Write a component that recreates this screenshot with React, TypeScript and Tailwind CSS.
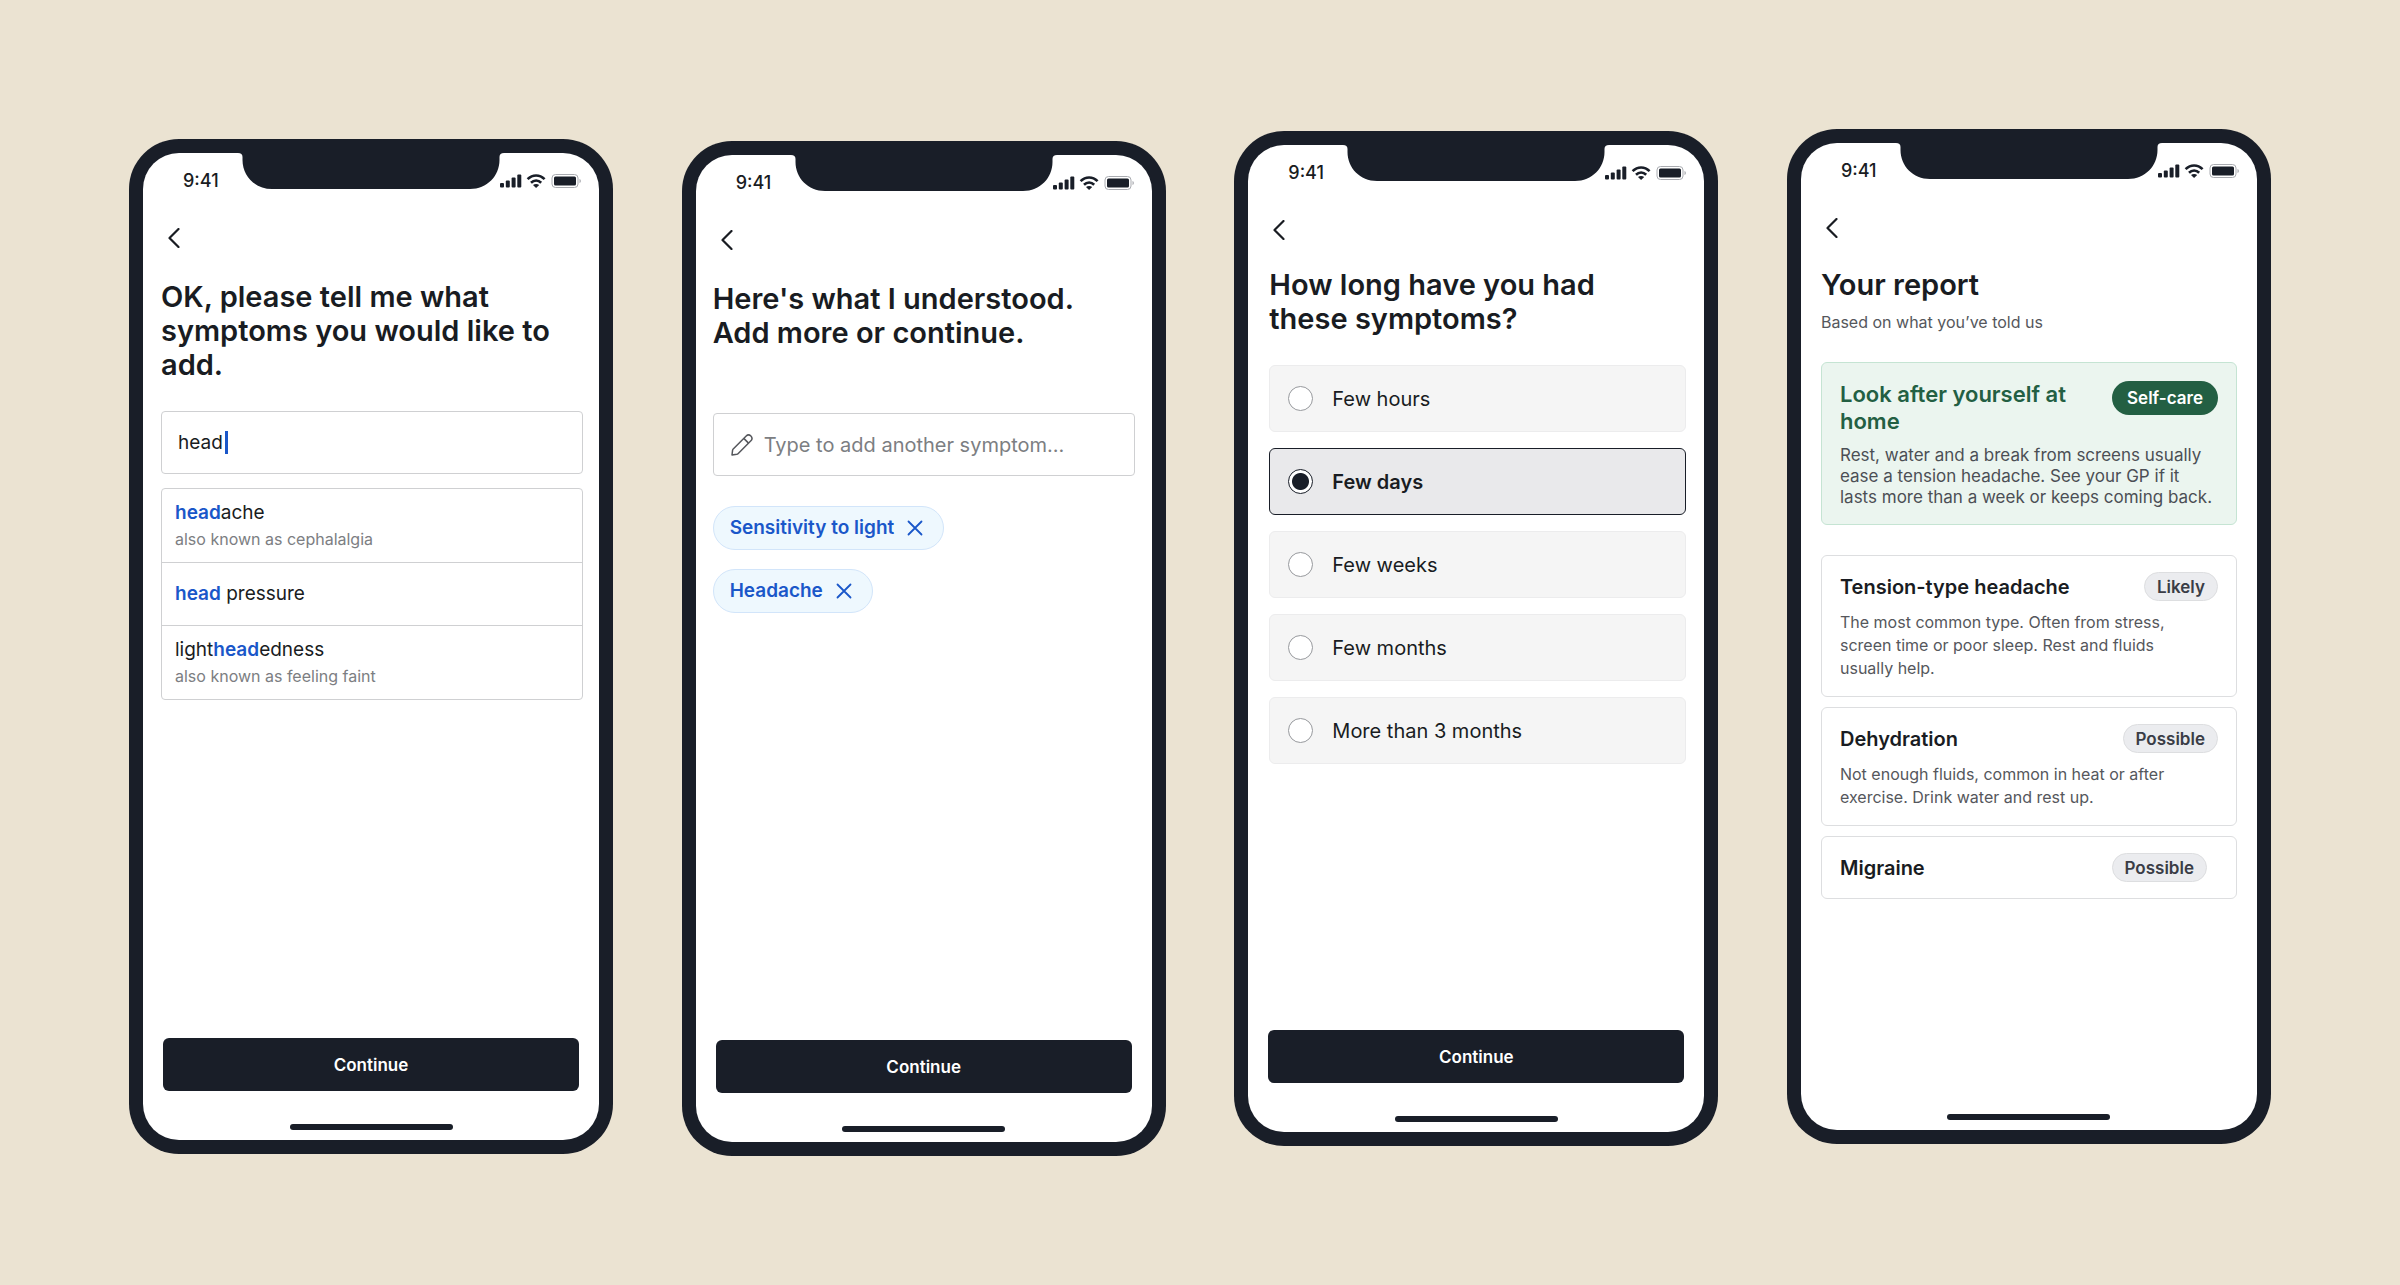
import { useState } from 'react'
import type { ReactNode } from 'react'
import clsx from 'clsx'

const DURATIONS = ['Few hours', 'Few days', 'Few weeks', 'Few months', 'More than 3 months']

const SUGGESTIONS = [
  { name: 'headache', aka: 'also known as cephalalgia' },
  { name: 'head pressure' },
  { name: 'lightheadedness', aka: 'also known as feeling faint' },
]

const CONDITIONS = [
  {
    name: 'Tension-type headache',
    chance: 'Likely',
    body: 'The most common type. Often from stress, screen time or poor sleep. Rest and fluids usually help.',
  },
  {
    name: 'Dehydration',
    chance: 'Possible',
    body: 'Not enough fluids, common in heat or after exercise. Drink water and rest up.',
  },
  { name: 'Migraine', chance: 'Possible' },
]

function Notch() {
  return (
    <svg
      aria-hidden="true"
      viewBox="0 0 266 37"
      className="absolute left-1/2 top-0 h-[37px] w-[266px] -translate-x-1/2 -translate-y-px"
      fill="#191e28"
    >
      <path d="M0 0H266V1C263 1 261.500 2.500 261.500 5V8C261.500 24 249 37 232 37H34C17 37 4.500 24 4.500 8V5C4.500 2.500 3 1 0 1Z" />
    </svg>
  )
}

function StatusIcons() {
  return (
    <svg aria-hidden="true" viewBox="0 0 82 16" className="h-4 w-[82px]" fill="#191e28">
      {/* signal */}
      <rect x="0" y="10" width="4" height="4.500" rx="1" />
      <rect x="5.800" y="7.500" width="4" height="7" rx="1" />
      <rect x="11.600" y="4.500" width="4" height="10" rx="1" />
      <rect x="17.300" y="1.500" width="4" height="13" rx="1" />
      {/* wifi */}
      <g fill="none" stroke="#191e28" strokeWidth="2.600">
        <path d="M27.600 6.200C32.600 1.200 39.600 1.200 44.600 6.200" />
        <path d="M31 9.800C34 6.900 38.200 6.900 41.200 9.800" />
      </g>
      <path d="M36.100 15L33 12C34.700 10.500 37.500 10.500 39.200 12Z" />
      {/* battery */}
      <rect x="52" y="1.500" width="26" height="13" rx="3.500" fill="none" stroke="#a9abb0" />
      <rect x="54" y="3.500" width="22" height="9" rx="1.500" />
      <path d="M79.500 6C81.300 6.500 81.300 9.500 79.500 10Z" fill="#a9abb0" />
    </svg>
  )
}

function PencilIcon() {
  return (
    <svg
      aria-hidden="true"
      viewBox="0 0 22 22"
      className="size-[22px] shrink-0"
      fill="none"
      stroke="#55575c"
      strokeWidth="1.500"
      strokeLinejoin="round"
    >
      <path d="M1 21L1.600 16.200C1.700 15.700 1.900 15.300 2.200 15L15.200 2C16.500 0.700 18.500 0.700 19.900 2C21.200 3.400 21.200 5.400 19.900 6.700L7 19.700C6.700 20 6.300 20.200 5.800 20.300Z" />
      <path d="M12.800 4.400L17.500 9.100" />
    </svg>
  )
}

type PhoneProps = {
  title: string
  subtitle?: string
  className?: string
  bodyClassName: string
  titleClassName?: string
  action?: boolean
  children: ReactNode
}

function Phone({ title, subtitle, className, bodyClassName, titleClassName, action = true, children }: PhoneProps) {
  return (
    <section className={clsx('w-[484px] shrink-0 rounded-[50px] bg-[#191e28] p-3.5', className)}>
      <div className="relative flex min-h-[987px] flex-col overflow-hidden rounded-[36px] bg-white">
        <Notch />
        <div className="flex h-14 items-center justify-between pl-10 pr-[17px]">
          <span className="text-[18px] font-medium leading-6">9:41</span>
          <StatusIcons />
        </div>

        <div className="flex h-[58px] items-center pl-[18px]">
          <button type="button" aria-label="Back" className="flex size-[26px] items-center justify-center">
            <svg
              viewBox="0 0 12 20"
              className="h-5 w-3"
              fill="none"
              stroke="#191c22"
              strokeWidth="2.200"
              strokeLinecap="round"
              strokeLinejoin="round"
            >
              <path d="M10.500 1L1.500 10L10.500 19" />
            </svg>
          </button>
        </div>

        <div className={clsx('flex grow flex-col', bodyClassName)}>
          <h2 className={clsx('text-[29px] font-semibold leading-[34px]', titleClassName)}>{title}</h2>
          {subtitle && <p className="mt-2 text-[16px] leading-6 text-[#55575c]">{subtitle}</p>}
          {children}
        </div>

        {action && (
          <div className="px-5">
            <button
              type="button"
              className="h-[53px] w-full rounded-md bg-[#191e28] text-[17px] font-semibold leading-6 text-white"
            >
              Continue
            </button>
          </div>
        )}
        <div className="mx-auto mb-2.5 mt-[33px] h-1.5 w-[163px] rounded-full bg-[#191e28]" />
      </div>
    </section>
  )
}

function Highlight({ text, match }: { text: string; match: string }) {
  const at = text.indexOf(match)
  return (
    <span className="text-[19px] leading-7">
      {text.slice(0, at)}
      <b className="font-semibold text-[#1a57c9]">{match}</b>
      {text.slice(at + match.length)}
    </span>
  )
}

function SymptomSearch() {
  const [query, setQuery] = useState('head')

  return (
    <>
      <label className="mt-[29px] flex h-[63px] items-center rounded border border-[#cfd0d2] pl-4">
        <input
          aria-label="Symptom"
          value={query}
          onChange={(e) => setQuery(e.target.value)}
          className="field-sizing-content text-[19px] leading-7 outline-none"
        />
        <span className="ml-0.5 h-[23px] w-[3px] bg-[#1a57c9]" />
      </label>
      <ul className="mt-3.5 divide-y divide-[#cfd0d2] rounded border border-[#cfd0d2]">
        {SUGGESTIONS.map((s) => (
          <li key={s.name}>
            <button
              type="button"
              className={clsx('flex w-full flex-col px-[13px] text-left', s.aka ? 'py-2.5' : 'py-[17px]')}
            >
              <Highlight text={s.name} match="head" />
              {s.aka && <span className="text-[16px] leading-[25px] text-[#7c7e82]">{s.aka}</span>}
            </button>
          </li>
        ))}
      </ul>
    </>
  )
}

function SymptomChips() {
  const [chips, setChips] = useState(['Sensitivity to light', 'Headache'])

  return (
    <>
      <label className="mt-[29px] flex h-[63px] items-center gap-[11px] rounded border border-[#cfd0d2] px-[17px]">
        <PencilIcon />
        <input
          aria-label="Add another symptom"
          placeholder="Type to add another symptom..."
          className="min-w-0 grow text-[20px] leading-7 outline-none placeholder:text-[#7c7e82]"
        />
      </label>
      <div className="mt-[30px] flex flex-col items-start gap-[19px]">
        {chips.map((chip) => (
          <span
            key={chip}
            className="flex h-11 items-center gap-[13px] rounded-full border border-[#d2e5fa] bg-[#eef8fe] pl-4 pr-5 text-[19px] font-semibold leading-7 text-[#1a57c9]"
          >
            {chip}
            <button type="button" aria-label={`Remove ${chip}`} onClick={() => setChips(chips.filter((c) => c !== chip))}>
              <svg viewBox="0 0 16 16" className="size-4" stroke="#1a57c9" strokeWidth="1.800" strokeLinecap="round">
                <path d="M1.500 1.500L14.500 14.500M14.500 1.500L1.500 14.500" />
              </svg>
            </button>
          </span>
        ))}
      </div>
    </>
  )
}

function DurationOptions() {
  const [selected, setSelected] = useState('Few days')

  return (
    <fieldset aria-label="Duration" className="mt-[29px] flex flex-col gap-4">
      {DURATIONS.map((d) => (
        <label
          key={d}
          className={clsx(
            'flex h-[67px] items-center gap-[19px] rounded-md border pl-[18px] text-[20px] leading-7',
            selected === d ? 'border-[#191e28] bg-[#e9e9eb] font-semibold' : 'border-[#ececed] bg-[#f5f5f5]',
          )}
        >
          <input
            type="radio"
            name="duration"
            checked={selected === d}
            onChange={() => setSelected(d)}
            className="size-[25px] appearance-none rounded-full border border-[#97999d] bg-white checked:border-[#191e28] checked:bg-[radial-gradient(circle,#191e28_8px,#ffffff_9px)]"
          />
          {d}
        </label>
      ))}
    </fieldset>
  )
}

function Report() {
  return (
    <>
      <div className="mt-7 rounded-md border border-[#c5e4d3] bg-[#ebf5ef] px-[18px] pb-4 pt-[18px]">
        <div className="flex items-start justify-between">
          <h3 className="w-[240px] text-[22px] font-semibold leading-[27px] text-[#235f43]">Look after yourself at home</h3>
          <span className="flex h-[34px] items-center rounded-full bg-[#235f43] px-[15px] text-[17px] font-semibold leading-6 text-white">
            Self-care
          </span>
        </div>
        <p className="mt-2.5 text-[17px] leading-[21px] text-[#4b4f55]">
          Rest, water and a break from screens usually ease a tension headache. See your GP if it lasts more than a week or
          keeps coming back.
        </p>
      </div>
      <div className="mt-[30px] flex flex-col gap-2.5">
        {CONDITIONS.map((c) => (
          <article key={c.name} className="rounded-md border border-[#dddee0] px-[18px] py-4">
            <div className={clsx('flex items-center justify-between', !c.body && 'pr-[11px]')}>
              <h3 className="text-[20px] font-semibold leading-7">{c.name}</h3>
              <span className="flex h-[29px] items-center rounded-full border border-[#dddee0] bg-[#ebecef] px-3 text-[17px] font-semibold leading-6 text-[#3a3d46]">
                {c.chance}
              </span>
            </div>
            {c.body && <p className="mt-2.5 pr-4 text-[16px] leading-[23px] text-[#55575c]">{c.body}</p>}
          </article>
        ))}
      </div>
    </>
  )
}

export default function App() {
  return (
    <main className="flex min-h-screen items-start justify-between bg-[#ebe3d2] px-[129px] pt-[129px] font-['Inter',sans-serif] text-[#191c22]">
      <Phone
        title="OK, please tell me what symptoms you would like to add."
        className="mt-2.5"
        bodyClassName="pl-[18px] pr-4 pt-[13px]"
        titleClassName="min-h-[102px]"
      >
        <SymptomSearch />
      </Phone>
      <Phone
        title="Here's what I understood. Add more or continue."
        className="mt-3"
        bodyClassName="px-[17px] pt-[13px]"
        titleClassName="min-h-[102px] w-[390px]"
      >
        <SymptomChips />
      </Phone>
      <Phone
        title="How long have you had these symptoms?"
        className="mt-0.5"
        bodyClassName="pl-[21px] pr-[18px] pt-[9px]"
        titleClassName="w-[390px]"
      >
        <DurationOptions />
      </Phone>
      <Phone title="Your report" subtitle="Based on what you’ve told us" bodyClassName="px-5 pt-[11px]" action={false}>
        <Report />
      </Phone>
    </main>
  )
}
